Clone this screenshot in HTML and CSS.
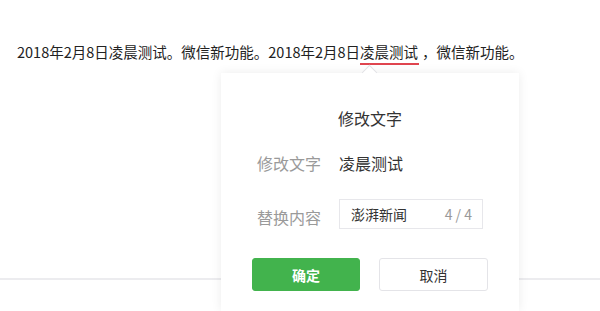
FILE: index.html
```html
<!DOCTYPE html>
<html lang="zh-CN">
<head>
<meta charset="utf-8">
<title>修改文字</title>
<link rel="stylesheet" href="styles.css">
</head>
<body>
<div class="page">
  <p class="article">2018年2月8日凌晨测试。微信新功能。2018年2月8日<span class="mark">凌晨测试</span>，微信新功能。</p>
  <div class="divider"></div>
  <div class="popover">
    <div class="arrow"></div>
    <div class="title">修改文字</div>
    <div class="row">
      <div class="label">修改文字</div>
      <div class="value">凌晨测试</div>
    </div>
    <div class="row row-input">
      <div class="label">替换内容</div>
      <div class="input">
        <span class="input-text">澎湃新闻</span>
        <span class="counter">4 / 4</span>
      </div>
    </div>
    <div class="actions">
      <button class="btn btn-primary">确定</button>
      <button class="btn btn-default">取消</button>
    </div>
  </div>
</div>
</body>
</html>
```
FILE: styles.css
```css
html, body {
  margin: 0;
  padding: 0;
  background: #fff;
}
body {
  font-family: "Noto Sans CJK SC", "Noto Sans", sans-serif;
  color: #333;
  width: 600px;
  height: 311px;
  overflow: hidden;
}
.page {
  position: relative;
  width: 600px;
  height: 311px;
  overflow: hidden;
}
.article {
  margin: 0;
  padding: 40px 0 0 17px;
  font-size: 14.5px;
  line-height: 24px;
  color: #222;
  white-space: nowrap;
}
.mark {
  border-bottom: 2px solid #e0454f;
  padding: 0 1px 1px 0;
  margin-right: 3px;
}
.divider {
  margin-top: 214px;
  height: 2px;
  background: #ececef;
}
.popover {
  position: absolute;
  left: 221px;
  top: 73px;
  bottom: 0;
  width: 298px;
  background: #fff;
  box-shadow: 0 0 10px rgba(0, 0, 0, 0.08);
  box-sizing: border-box;
  padding-top: 35px;
}
.arrow {
  position: absolute;
  top: -6px;
  left: 143px;
  width: 10px;
  height: 10px;
  background: #fff;
  border-left: 1px solid #e2e2e6;
  border-top: 1px solid #e2e2e6;
  transform: rotate(45deg);
}
.title {
  text-align: center;
  font-size: 16px;
  line-height: 20px;
  color: #333;
}
.row {
  display: flex;
  align-items: center;
  margin-top: 25px;
  padding-left: 36px;
  font-size: 16px;
  line-height: 20px;
}
.label {
  width: 82px;
  color: #9a9a9a;
}
.value {
  color: #333;
}
.row-input {
  margin-top: 26px;
}
.row-input .label {
  padding-top: 5px;
}
.input {
  width: 144px;
  height: 30px;
  box-sizing: border-box;
  border: 1px solid #e7e7eb;
  display: flex;
  align-items: center;
  justify-content: space-between;
  padding: 0 10px 0 11px;
  font-size: 14px;
}
.input-text {
  color: #333;
}
.counter {
  color: #999;
  font-size: 14px;
}
.actions {
  display: flex;
  gap: 19px;
  padding-left: 31px;
  margin-top: 29px;
}
.btn {
  width: 108px;
  height: 33px;
  border-radius: 3px;
  font-family: "Noto Sans CJK SC", sans-serif;
  font-size: 14px;
  cursor: pointer;
  padding: 0;
}
.btn-primary {
  background: #42b34d;
  border: 1px solid #42b34d;
  color: #fff;
  font-weight: bold;
}
.btn-default {
  background: #fff;
  border: 1px solid #e4e4e8;
  color: #333;
  width: 109px;
}
```
